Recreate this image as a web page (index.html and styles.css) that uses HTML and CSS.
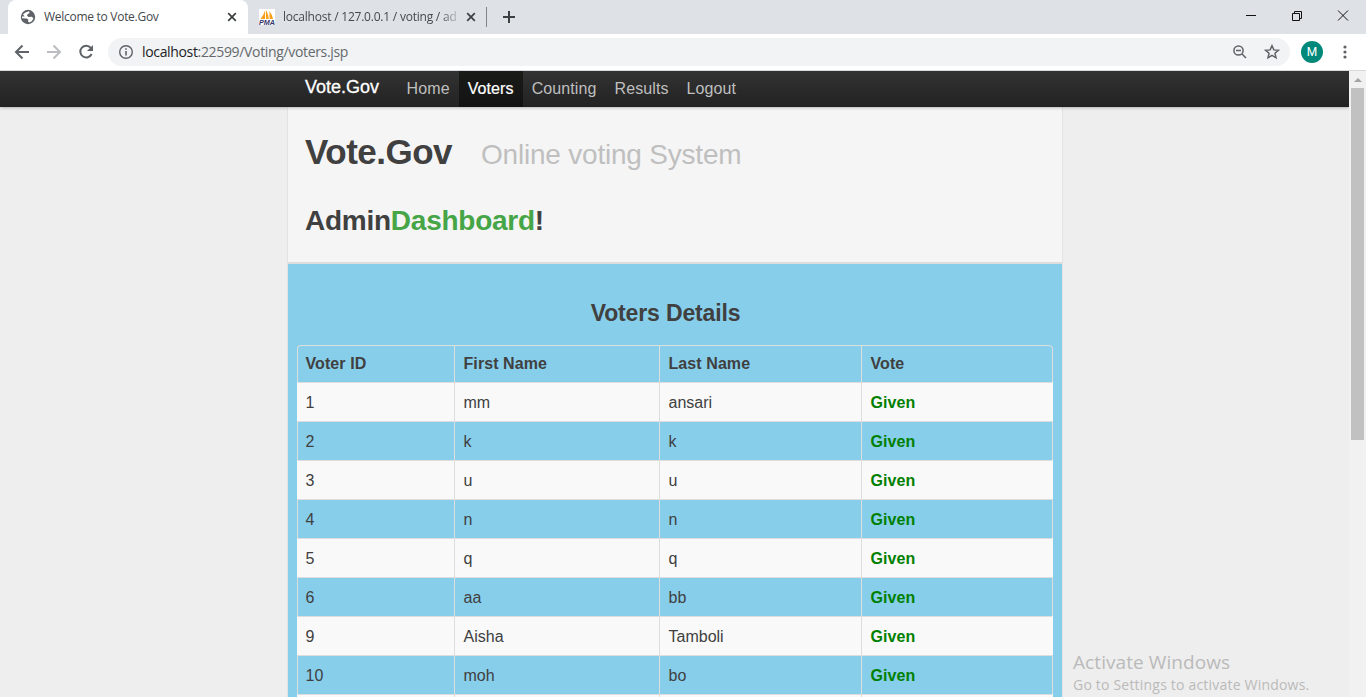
FILE: index.html
```
<!DOCTYPE html>
<html lang="en">
<head>
<meta charset="utf-8">
<title>Welcome to Vote.Gov</title>
<link rel="stylesheet" href="styles.css">
</head>
<body>
<div class="window">
  <header class="tabstrip">
    <div class="tab tab-active">
      <svg class="favicon" width="16" height="16" viewBox="0 0 16 16"><circle cx="8" cy="8" r="7.2" fill="#5f6368"/><path d="M3 5.2 5.6 3.4 9 2.2 9.6 4 7.8 5 7 6.8 8.6 8 12 7.8 13.4 9.4 12 12 9.4 13.6 8 12.6 8.4 10.6 6.6 9.6 2.2 9.2 2 7.4 4.6 7.6Z" fill="#fff"/></svg>
      <span class="tab-title title-one">Welcome to Vote.Gov</span>
      <svg class="tab-close" width="10" height="10" viewBox="0 0 10 10"><path d="M1.2 1.2 8.8 8.8M8.8 1.2 1.2 8.8" stroke="#3c4043" stroke-width="1.7"/></svg>
    </div>
    <div class="tab tab-second">
      <svg class="favicon" width="16" height="16" viewBox="0 0 16 16"><path fill="#fff" d="M0 0h16v16H0z"/><path d="M6.2 1 6 10H1.5Q4.8 6 6.2 1ZM7 1Q9.6 5.5 9.7 10H7ZM10.4 2.2Q13.6 6 14 10h-3.4Z" fill="#f9a01b"/><text x="0" y="16" class="pma" textLength="16" lengthAdjust="spacingAndGlyphs">PMA</text></svg>
      <span class="tab-title title-two">localhost / 127.0.0.1 / voting / ad</span>
      <svg class="tab-close" width="10" height="10" viewBox="0 0 10 10"><path d="M1.2 1.2 8.8 8.8M8.8 1.2 1.2 8.8" stroke="#3c4043" stroke-width="1.7"/></svg>
    </div>
    <span class="tab-divider"></span>
    <svg class="new-tab" width="14" height="14" viewBox="0 0 14 14"><path d="M7 1v12M1 7h12" stroke="#3c4043" stroke-width="2"/></svg>
    <div class="controls">
      <svg width="110" height="16" viewBox="0 0 110 16" fill="none" stroke="#111"><path d="M2 8.5h10M48.5 6.5h7v7h-7zM50.5 6.5v-2h7v7h-2M94 3.500l10 10M104 3.500l-10 10"/></svg>
    </div>
  </header>
  <div class="toolbar">
    <svg class="nav-icons" width="82" height="20" viewBox="0 0 82 20" fill="none" stroke-width="2"><path d="M15 10H2M8.5 3.5 2 10l6.500 6.500" stroke="#5f6368"/><path d="M33 10h13M39.500 3.500 46 10l-6.500 6.500" stroke="#bbbdc0"/><path d="M76.800 5.800A5.900 5.900 0 1 0 77.600 12" stroke="#5f6368"/><path d="M79 3v6h-6Z" fill="#5f6368"/></svg>
    <div class="omnibox">
      <svg class="info" width="16" height="16" viewBox="0 0 16 16" fill="none" stroke="#5f6368"><circle cx="8" cy="8" r="6.300" stroke-width="1.400"/><path d="M8 7v4.500M8 4.300v1.500" stroke-width="1.600"/></svg>
      <span class="url"><b>localhost</b>:22599/Voting/voters.jsp</span>
      <svg class="tools" width="50" height="18" viewBox="0 0 50 18" fill="none" stroke="#5f6368"><circle cx="7.500" cy="7.500" r="4.600" stroke-width="1.500"/><path d="M5 7.500h5M11 11l4 4" stroke-width="1.500"/><path d="m41 2.700 1.850 4.200 4.550.4-3.450 3 1.050 4.500-4-2.400-4 2.400 1.050-4.500-3.450-3 4.550-.4Z" stroke-width="1.500"/></svg>
    </div>
    <span class="avatar">M</span>
    <svg class="menu" width="4" height="16" viewBox="0 0 4 16" fill="#5f6368"><circle cx="2" cy="3" r="1.600"/><circle cx="2" cy="8" r="1.600"/><circle cx="2" cy="13" r="1.600"/></svg>
  </div>
  <div class="viewport">
    <div class="page">
      <nav class="navbar">
        <div class="navbar-inner">
          <a class="brand">Vote.Gov</a>
          <a class="link">Home</a><a class="link link-active">Voters</a><a class="link">Counting</a><a class="link">Results</a><a class="link">Logout</a>
        </div>
      </nav>
      <main class="container">
        <section class="masthead">
          <h1><span class="name">Vote.Gov</span><small>Online voting System</small></h1>
          <h2>Admin<span class="green">Dashboard</span>!</h2>
        </section>
        <section class="details">
          <h3>Voters Details</h3>
          <table class="voters">
            <colgroup><col class="c1"><col class="c2"><col class="c3"><col class="c4"></colgroup>
            <thead><tr><th>Voter ID</th><th>First Name</th><th>Last Name</th><th>Vote</th></tr></thead>
            <tbody>
              <tr><td>1</td><td>mm</td><td>ansari</td><td class="given">Given</td></tr>
              <tr><td>2</td><td>k</td><td>k</td><td class="given">Given</td></tr>
              <tr><td>3</td><td>u</td><td>u</td><td class="given">Given</td></tr>
              <tr><td>4</td><td>n</td><td>n</td><td class="given">Given</td></tr>
              <tr><td>5</td><td>q</td><td>q</td><td class="given">Given</td></tr>
              <tr><td>6</td><td>aa</td><td>bb</td><td class="given">Given</td></tr>
              <tr><td>9</td><td>Aisha</td><td>Tamboli</td><td class="given">Given</td></tr>
              <tr><td>10</td><td>moh</td><td>bo</td><td class="given">Given</td></tr>
              <tr><td></td><td></td><td></td><td></td></tr>
            </tbody>
          </table>
        </section>
      </main>
    </div>
    <div class="scrollbar"><span class="arrow"></span><span class="thumb"></span></div>
  </div>
  <div class="watermark"><p class="wm-title">Activate Windows</p><p class="wm-text">Go to Settings to activate Windows.</p></div>
</div>
</body>
</html>
```
FILE: styles.css
```
* { box-sizing: border-box; }
body { margin: 0; font-family: "Liberation Sans", Arial, sans-serif; color: #404040; }
h1, h2, h3, p { margin: 0; }
.window { position: relative; width: 1366px; height: 697px; overflow: hidden; display: flex; flex-direction: column; }

.tabstrip { height: 34px; flex: none; background: #dee1e6; display: flex; align-items: center; padding-left: 8px; font-family: "Open Sans", sans-serif; font-size: 12px; color: #45494d; }
.tab { display: flex; align-items: center; height: 34px; }
.tab-active { width: 240px; background: #fff; border-radius: 8px 8px 0 0; padding-left: 12px; }
.tab-second { width: 238px; padding-left: 11px; }
.favicon { flex: none; margin-right: 8px; }
.tab-title { width: 175px; overflow: hidden; white-space: nowrap; line-height: 18px; }
.title-one { letter-spacing: -0.28px; margin-right: 8px; }
.title-two { letter-spacing: -0.22px; margin-right: 8px; -webkit-mask-image: linear-gradient(to right, #000 90%, transparent 102%); mask-image: linear-gradient(to right, #000 90%, transparent 102%); }
.tab-close { flex: none; }
.pma { font: italic bold 7px "Liberation Sans", sans-serif; fill: #34346a; }
.tab-divider { width: 1px; height: 20px; background: #808488; margin: 0 15px 0 0; }
.new-tab { flex: none; }
.controls { margin-left: auto; padding-right: 12px; height: 16px; margin-top: -5px; }
.controls svg { display: block; }

.toolbar { height: 37px; flex: none; background: #fff; border-bottom: 1px solid #d5d9dc; display: flex; align-items: center; padding-left: 14px; }
.nav-icons { flex: none; margin-right: 12px; }
.omnibox { width: 1182px; height: 28px; border-radius: 14px; background: #f1f3f4; display: flex; align-items: center; padding: 0 9px 0 10px; }
.info { margin-right: 8px; }
.url { font: 14px/20px "Open Sans", sans-serif; letter-spacing: -0.34px; color: #65696d; }
.url b { font-weight: 400; color: #202124; }
.tools { margin-left: auto; }
.avatar { width: 22px; height: 22px; border-radius: 50%; background: #00897b; color: #fff; font: 12px/22px Roboto, sans-serif; text-align: center; margin: 0 20px 0 11px; }

.viewport { flex: 1; min-height: 0; display: flex; }
.page { width: 1349px; background: #eee; overflow: hidden; }
.navbar { position: relative; height: 36px; background: linear-gradient(#333, #222); box-shadow: 0 1px 3px rgba(0,0,0,.25), inset 0 -1px 0 rgba(0,0,0,.1); }
.navbar-inner { display: flex; width: 774px; margin-left: 288px; padding-left: 17px; height: 36px; line-height: 35px; font-size: 16px; }
.brand { width: 92.6px; font-size: 18px; line-height: 32px; color: #fff; -webkit-text-stroke: .3px #fff; }
.link { padding: 0 9px; color: #bfbfbf; letter-spacing: .1px; }
.link-active { background: linear-gradient(#1a1c19, #121212); color: #fff; -webkit-text-stroke: .2px #fff; }
.container { width: 776px; margin-left: 287px; border: solid #e2e2e2; border-width: 0 1px; }
.masthead { height: 157px; background: #f5f5f5; border-bottom: 2px solid #ddd; padding: 25px 0 0 17px; }
h1 { display: flex; align-items: baseline; line-height: 40px; font-size: 35px; letter-spacing: -.5px; }
.name { width: 176px; }
small { font-size: 28px; font-weight: 400; color: #bfbfbf; letter-spacing: -.21px; }
h2 { font-size: 28px; line-height: 40px; margin-top: 26px; letter-spacing: -.25px; }
.green { color: #46a546; }
.details { background: #87ceeb; height: 440px; padding: 29px 9px 0; }
h3 { font-size: 23px; line-height: 40px; text-align: center; margin-bottom: 12px; padding-right: 19px; letter-spacing: -.15px; }
.voters { width: 756px; table-layout: fixed; border-collapse: separate; border-spacing: 0; border-right: 1px solid #ddd; border-radius: 4px 4px 0 0; font-size: 16px; }
.c1 { width: 157px; }
.c2 { width: 205px; }
.c3 { width: 202px; }
.c4 { width: 191px; }
.voters th, .voters td { border: solid #ddd; border-width: 1px 0 0 1px; padding: 0 8px 0 8.5px; text-align: left; line-height: 22px; }
.voters th:first-child, .voters td:first-child { padding-left: 7.5px; }
.voters th { height: 37px; letter-spacing: .08px; }
.voters td { height: 39px; padding-top: 2px; }
.voters th:first-child { border-top-left-radius: 4px; }
.voters th:last-child { border-top-right-radius: 4px; }
.voters tbody tr:nth-child(odd) td { background: #f9f9f9; }
.voters tbody tr:nth-child(odd) td:first-child { border-left-color: #f9f9f9; }
.voters tbody tr:nth-child(odd) td:last-child { box-shadow: 1px 0 #f9f9f9; }
.voters .given { color: green; font-weight: 700; letter-spacing: .08px; }

.scrollbar { width: 17px; background: #f1f1f1; display: flex; flex-direction: column; align-items: center; padding-top: 7px; }
.arrow { border: solid transparent; border-width: 0 4px 4px; border-bottom-color: #a3a3a3; }
.thumb { width: 13px; height: 352px; background: #c1c1c1; margin-top: 6px; }
.watermark { position: absolute; left: 1073px; top: 651px; font-family: "Open Sans", sans-serif; color: #bababa; white-space: nowrap; }
.wm-title { font-size: 19px; line-height: 23px; letter-spacing: .08px; }
.wm-text { font-size: 14px; line-height: 22px; letter-spacing: .2px; }
```
